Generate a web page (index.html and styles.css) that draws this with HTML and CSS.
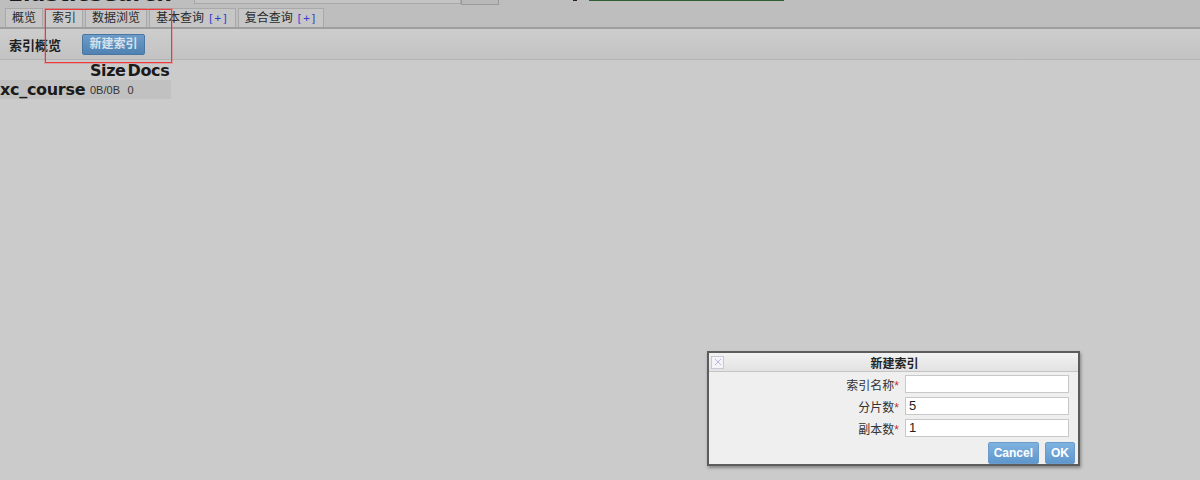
FILE: index.html
```html
<!DOCTYPE html>
<html lang="zh">
<head>
<meta charset="utf-8">
<title>Elasticsearch Head</title>
<link rel="stylesheet" href="styles.css">
</head>
<body>
<div class="header">
  <div class="top">
    <h1 class="title">Elasticsearch</h1>
    <div class="connect">
      <span class="url-input"></span>
      <span class="connect-btn"></span>
    </div>
    <span class="health-mark"></span>
    <span class="health"></span>
  </div>
  <div class="tabs">
    <span class="tab">概览</span>
    <span class="tab active">索引</span>
    <span class="tab">数据浏览</span>
    <span class="tab">基本查询 <span class="plus">[+]</span></span>
    <span class="tab">复合查询 <span class="plus">[+]</span></span>
  </div>
</div>
<div class="toolbar">
  <span class="toolbar-title">索引概览</span>
  <span class="btn-new">新建索引</span>
</div>
<table class="indices">
  <thead>
    <tr><th class="name-col"></th><th>Size</th><th>Docs</th></tr>
  </thead>
  <tbody>
    <tr class="row"><th>xc_course</th><td>0B/0B</td><td>0</td></tr>
  </tbody>
</table>

<div class="annotation"></div>

<div class="dialog">
  <div class="dialog-title">
    <span class="close"><svg width="10" height="10" viewBox="0 0 10 10"><path d="M2 2L8 8M8 2L2 8" stroke="#b8b8d8" stroke-width="1"/></svg></span>
    <span class="dialog-name">新建索引</span>
  </div>
  <div class="dialog-body">
    <div class="form">
      <label class="lbl">索引名称<span class="req">*</span></label>
      <span class="field"></span>
      <label class="lbl">分片数<span class="req">*</span></label>
      <span class="field">5</span>
      <label class="lbl">副本数<span class="req">*</span></label>
      <span class="field">1</span>
    </div>
    <div class="actions">
      <span class="dbtn">Cancel</span>
      <span class="dbtn">OK</span>
    </div>
  </div>
</div>
</body>
</html>
```

FILE: styles.css
```css
html, body {
  margin: 0;
  padding: 0;
}
body {
  background: #cbcbcb;
  font-family: "Liberation Sans", "Noto Sans CJK SC", sans-serif;
  color: #222;
  height: 480px;
  overflow: hidden;
}
.header {
  display: flow-root;
  height: 27px;
  background: #bebebe;
  border-bottom: 2px solid #9e9e9e;
}
.top {
  display: flex;
  align-items: flex-end;
  height: 21px;
  margin-top: -15px;
}
.title {
  margin: 0 0 3px 8px;
  font-family: "DejaVu Sans", sans-serif;
  font-size: 22px;
  font-weight: bold;
  line-height: 24px;
  height: 21px;
  color: #1a1a1a;
  width: 186px;
}
.connect {
  display: flex;
  align-items: flex-end;
  height: 21px;
}
.url-input {
  width: 265px;
  height: 20px;
  background: #c4c4c4;
  border: 1px solid #a8a8a8;
  margin-bottom: 2px;
}
.connect-btn {
  width: 36px;
  height: 20px;
  background: #b8b8b8;
  border: 1px solid #9a9a9a;
  margin-bottom: 1px;
}
.health-mark {
  width: 4px;
  height: 4px;
  background: #222;
  margin: 0 0 5px 74px;
}
.health {
  width: 195px;
  height: 18px;
  background: #5a9a5a;
  border-bottom: 1px solid #2f5f2f;
  margin: 0 0 5px 12px;
}
.tabs {
  display: flex;
  gap: 2px;
  margin: 3px 0 0 5px;
  height: 18px;
  align-items: flex-end;
}
.tab {
  height: 18px;
  padding: 0 6px;
  border: 1px solid #a9a9a9;
  border-bottom: none;
  background: #c6c6c6;
  font-size: 12px;
  line-height: 19px;
  color: #2a2a2a;
  white-space: nowrap;
}
.tab.active {
  background: #cacaca;
}
.plus {
  color: #3a3ad0;
  font-family: "DejaVu Sans Mono", monospace;
  font-size: 11px;
  letter-spacing: 0.5px;
}
.toolbar {
  height: 30px;
  display: flex;
  align-items: center;
  background: linear-gradient(#cdcdcd, #c3c3c3);
  border-bottom: 1px solid #b4b4b4;
  padding-left: 9px;
}
.toolbar-title {
  font-size: 13px;
  font-weight: bold;
  color: #1e1e1e;
  width: 73px;
}
.btn-new {
  width: 61px;
  height: 19px;
  line-height: 19px;
  text-align: center;
  font-size: 12px;
  font-weight: bold;
  color: #d6e1ec;
  background: linear-gradient(#6d9cc8, #4f82b2);
  border: 1px solid #4a77a2;
  border-radius: 2px;
}
.indices {
  border-collapse: collapse;
  margin-top: 2px;
  font-family: "DejaVu Sans", sans-serif;
}
.indices th, .indices td {
  padding: 0 2px 0 0;
  text-align: left;
}
.indices .name-col {
  width: 88px;
}
.indices thead th {
  font-size: 16px;
  font-weight: bold;
  line-height: 18px;
  color: #1a1a1a;
  letter-spacing: -0.4px;
}
.indices .row {
  background: #c1c1c1;
}
.indices .row th {
  font-size: 16px;
  font-weight: bold;
  line-height: 19px;
  color: #1a1a1a;
  letter-spacing: -0.3px;
}
.indices .row td {
  font-family: "Liberation Sans", sans-serif;
  font-size: 11px;
  color: #333;
  vertical-align: middle;
}
.annotation {
  position: absolute;
  z-index: 5;
  left: 45px;
  top: 9px;
  width: 125px;
  height: 52px;
  border: 1px solid #e83c3c;
  box-shadow: 0 0 0 1px rgba(232, 90, 90, 0.35);
  pointer-events: none;
}
.dialog {
  position: absolute;
  left: 707px;
  top: 351px;
  width: 369px;
  height: 111px;
  border: 2px solid #5c5c5c;
  background: #efefef;
  box-shadow: 1px 2px 3px rgba(0, 0, 0, 0.35);
  display: flex;
  flex-direction: column;
}
.dialog-title {
  height: 18px;
  background: linear-gradient(#f2f2f2, #e2e2e2);
  border-bottom: 1px solid #c4c4c4;
  display: flex;
  align-items: center;
  padding-left: 2px;
}
.close {
  width: 11px;
  height: 11px;
  border: 1px solid #c8c8d6;
  background: #f4f4f8;
  display: flex;
  align-items: center;
  justify-content: center;
}
.dialog-name {
  flex: 1;
  text-align: center;
  font-size: 12px;
  font-weight: bold;
  color: #222;
  margin-right: 13px;
}
.dialog-body {
  flex: 1;
  display: flex;
  flex-direction: column;
  align-items: flex-end;
  padding: 3px 3px 0 0;
}
.form {
  display: grid;
  grid-template-columns: auto 164px;
  column-gap: 6px;
  row-gap: 4px;
  margin-right: 6px;
  align-items: center;
}
.lbl {
  text-align: right;
  font-size: 12px;
  color: #333;
}
.req {
  color: #c03030;
}
.field {
  height: 16px;
  background: #fff;
  border: 1px solid #c8c8c8;
  font-size: 13px;
  line-height: 16px;
  padding-left: 3px;
  color: #222;
}
.actions {
  display: flex;
  gap: 6px;
  margin-top: 5px;
}
.dbtn {
  height: 20px;
  line-height: 20px;
  padding: 0 5px;
  font-size: 12px;
  font-weight: bold;
  color: #fff;
  background: linear-gradient(#7fb2e0, #5f97cc);
  border: 1px solid #6a9ccb;
  border-radius: 2px;
}
```
